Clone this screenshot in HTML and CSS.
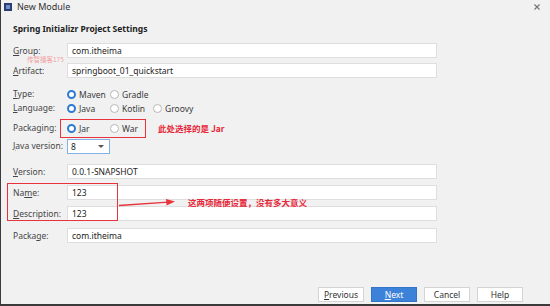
FILE: index.html
```html
<!DOCTYPE html>
<html>
<head>
<meta charset="utf-8">
<link rel="stylesheet" href="styles.css">
</head>
<body>
<div class="window">
  <div class="titlebar">
    <span class="app-icon"><span class="app-icon-inner"></span></span>
    <span class="title">New Module</span>
    <span class="close">
      <svg width="6" height="6" viewBox="0 0 6 6"><path d="M0.5 0.5 L5.5 5.5 M5.5 0.5 L0.5 5.5" stroke="#777" stroke-width="1.2"/></svg>
    </span>
  </div>
  <div class="content">
    <div class="heading">Spring Initializr Project Settings</div>
    <div class="form">
      <div class="row r-group"><span class="label"><u>G</u>roup:</span><div class="input">com.itheima</div></div>
      <div class="row r-artifact"><span class="label"><u>A</u>rtifact:</span><div class="input">springboot_01_quickstart</div></div>
      <div class="row r-type"><span class="label"><u>T</u>ype:</span>
        <div class="radios">
          <span class="opt"><span class="radio on"></span>Maven</span>
          <span class="opt"><span class="radio"></span>Gradle</span>
        </div>
      </div>
      <div class="row r-lang"><span class="label"><u>L</u>anguage:</span>
        <div class="radios">
          <span class="opt"><span class="radio on"></span>Java</span>
          <span class="opt"><span class="radio"></span>Kotlin</span>
          <span class="opt"><span class="radio"></span>Groovy</span>
        </div>
      </div>
      <div class="row r-pack"><span class="label">Packaging:</span>
        <div class="radios">
          <span class="opt"><span class="radio on"></span><u>J</u>ar</span>
          <span class="opt"><span class="radio"></span>War</span>
        </div>
        <span class="note note-jar">此处选择的是 Jar</span>
      </div>
      <div class="row r-java"><span class="label"><u>J</u>ava version:</span>
        <div class="select"><span>8</span><span class="caret"></span></div>
      </div>
      <div class="row r-version"><span class="label"><u>V</u>ersion:</span><div class="input">0.0.1-SNAPSHOT</div></div>
      <div class="row r-name"><span class="label">Na<u>m</u>e:</span><div class="input">123</div></div>
      <div class="row r-desc"><span class="label"><u>D</u>escription:</span><div class="input">123</div></div>
      <div class="row r-package"><span class="label">Packa<u>g</u>e:</span><div class="input">com.itheima</div></div>
    </div>
    <div class="buttons">
      <span class="btn"><u>P</u>revious</span>
      <span class="btn primary"><u>N</u>ext</span>
      <span class="btn">Cancel</span>
      <span class="btn">Help</span>
    </div>
  </div>
  <span class="watermark">传智播客175</span>
  <span class="box box-pack"></span>
  <span class="box box-name"></span>
  <svg class="arrow" width="62" height="12" viewBox="0 0 62 12">
    <path d="M1 8.5 L50 5.2" stroke="#e8323c" stroke-width="1.3" fill="none"/>
    <path d="M48 2 L57 4.6 L48.6 8.6 Z" fill="#e8323c"/>
  </svg>
  <span class="note note-name">这两项随便设置，没有多大意义</span>
</div>
</body>
</html>
```
FILE: styles.css
```css
* { box-sizing: border-box; }
html, body { margin: 0; padding: 0; }
body {
  width: 550px;
  height: 306px;
  overflow: hidden;
  background: #f1f1f1;
  font-family: "Noto Sans", "Open Sans", "Noto Sans CJK SC", sans-serif;
  font-size: 8.5px;
  color: #3a3a3a;
}
u { text-decoration: underline; text-underline-offset: 1px; }
.window {
  position: relative;
  width: 550px;
  height: 306px;
  border-left: 1px solid #3b3b3b;
  border-bottom: 2px solid #3b3b3b;
  display: flex;
  flex-direction: column;
}
.titlebar {
  height: 13px;
  display: flex;
  align-items: center;
  padding-left: 3px;
}
.app-icon {
  width: 8px;
  height: 8px;
  background: #2b3c6e;
  display: flex;
  align-items: center;
  justify-content: center;
}
.app-icon-inner { width: 4px; height: 4px; background: #6f8fcf; }
.title { margin-left: 5px; font-size: 9px; color: #333; }
.close { margin-left: auto; margin-right: 10px; display: flex; }
.content {
  flex: 1;
  display: flex;
  flex-direction: column;
  padding-left: 12px;
}
.heading {
  margin-top: 10px;
  height: 12px;
  line-height: 12px;
  font-weight: bold;
  font-size: 8.5px;
  color: #222;
}
.form { display: flex; flex-direction: column; }
.row { display: flex; align-items: center; }
.label { width: 54px; flex: none; color: #454545; line-height: 10px; }
.input {
  width: 370px;
  height: 15px;
  background: #fff;
  border: 1px solid #dedede;
  padding-left: 4px;
  line-height: 13px;
  color: #222;
}
.r-group { margin-top: 8px; height: 15px; }
.r-artifact { margin-top: 5px; height: 15px; }
.r-type { margin-top: 9px; height: 14px; }
.r-lang { margin-top: 0; height: 14px; }
.r-pack { margin-top: 4px; height: 18px; }
.r-java { margin-top: 2px; height: 14px; }
.r-version { margin-top: 11px; height: 15px; }
.r-name { margin-top: 6px; height: 15px; }
.r-desc { margin-top: 6px; height: 15px; }
.r-package { margin-top: 7px; height: 15px; }
.radios { display: flex; }
.opt { width: 43px; display: flex; align-items: center; color: #3a3a3a; }
.radio {
  width: 9px;
  height: 9px;
  border-radius: 50%;
  border: 1px solid #b8b8b8;
  background: #fff;
  margin-right: 3px;
  flex: none;
}
.radio.on {
  background: #fff;
  border: 2.5px solid #2f7ad4;
}
.note {
  color: #e8283a;
  font-weight: bold;
  font-size: 8.5px;
  font-family: "Noto Sans CJK SC", "Noto Sans", sans-serif;
}
.note-jar { margin-left: 5px; }
.select {
  width: 43px;
  height: 15px;
  background: #fff;
  border: 1.5px solid #7fb0e6;
  display: flex;
  align-items: center;
  padding-left: 3px;
  padding-right: 5px;
  color: #222;
}
.caret {
  margin-left: auto;
  width: 0; height: 0;
  border-left: 3px solid transparent;
  border-right: 3px solid transparent;
  border-top: 3px solid #555;
}
.buttons {
  margin-top: auto;
  margin-bottom: 2px;
  display: flex;
  justify-content: flex-end;
  gap: 7px;
  padding-right: 27px;
}
.btn {
  width: 46px;
  height: 15px;
  background: #fff;
  border: 1px solid #d4d4d4;
  display: flex;
  align-items: center;
  justify-content: center;
  color: #333;
}
.btn.primary {
  background: #3c82d8;
  border-color: #3274c8;
  color: #fff;
}
.watermark {
  position: absolute;
  left: 26px;
  top: 57px;
  font-size: 6.5px;
  line-height: 5px;
  color: #f0a0a0;
  font-family: "Noto Sans CJK SC", sans-serif;
}
.box {
  position: absolute;
  border: 1.5px solid #e8323c;
}
.box-pack { left: 59px; top: 119px; width: 86px; height: 19px; }
.box-name { left: 6px; top: 183px; width: 111px; height: 38px; }
.arrow { position: absolute; left: 117px; top: 197px; }
.note-name { position: absolute; left: 187px; top: 196px; }
```
